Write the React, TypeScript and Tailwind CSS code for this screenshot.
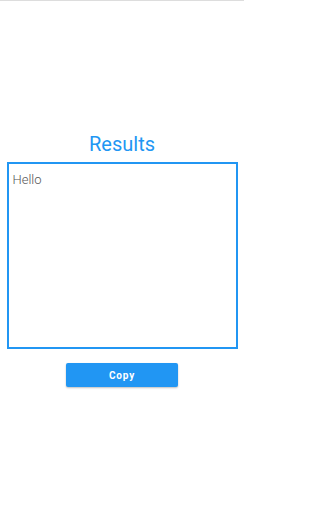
export default function App() {
  return (
    <div
      className="h-[512px] w-[244px] bg-white border-t border-[#dddddd] flex flex-col items-center pt-[131px]"
      style={{ fontFamily: 'Roboto, "Noto Sans", sans-serif' }}
    >
      <h1 className="text-[20px] leading-[24px] text-[#2196F3] font-normal">Results</h1>
      <div className="mt-[6px] w-[231px] h-[187px] border-2 border-[#2196F3] px-[4px] py-[8px]">
        <p className="text-[13px] leading-[16px] text-[#555555] font-light">Hello</p>
      </div>
      <button className="mt-[14px] w-[112px] h-[24px] rounded-[2px] bg-[#2196F3] text-white text-[10px] font-bold tracking-[0.08em] shadow-[0_1px_2px_rgba(0,0,0,0.25)]">
        Copy
      </button>
    </div>
  );
}
